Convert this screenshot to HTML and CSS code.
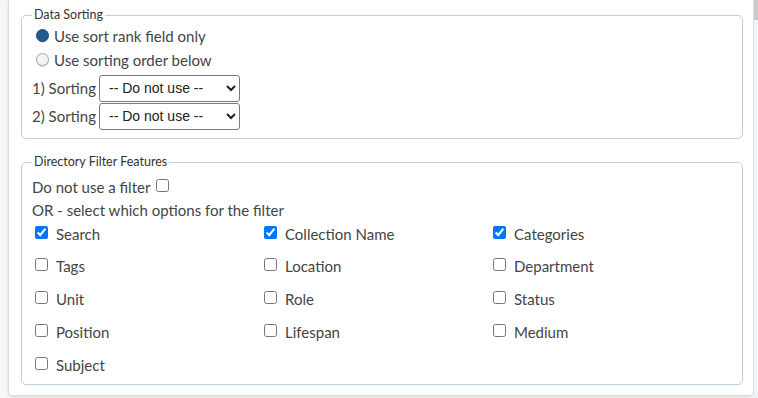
FILE: index.html
```html
<!DOCTYPE html>
<html lang="en">
<head>
    <meta charset="UTF-8">
    <title>Directory Settings</title>
    <link rel="stylesheet" href="styles.css">
</head>
<body>
    <div class="page">
        <div class="card">
            <!-- Sorting -->
            <fieldset class="group sorting">
                <legend>Data Sorting</legend>
                <label class="radio-row first">
                    <input type="radio" name="sortmode" class="radio" checked>
                    <span>Use sort rank field only</span>
                </label>
                <label class="radio-row">
                    <input type="radio" name="sortmode" class="radio">
                    <span>Use sorting order below</span>
                </label>
                <div class="select-row first">
                    <span>1) Sorting</span>
                    <select class="sort-select">
                        <option>-- Do not use --</option>
                    </select>
                </div>
                <div class="select-row">
                    <span>2) Sorting</span>
                    <select class="sort-select">
                        <option>-- Do not use --</option>
                    </select>
                </div>
            </fieldset>

            <!-- Filter -->
            <fieldset class="group filters">
                <legend>Directory Filter Features</legend>
                <label class="text-row first">
                    <span>Do not use a filter</span>
                    <input type="checkbox" class="check inline-check">
                </label>
                <div class="text-row">OR - select which options for the filter</div>
                <div class="filter-grid">
                    <label class="opt"><input type="checkbox" class="check" checked><span>Search</span></label>
                    <label class="opt"><input type="checkbox" class="check" checked><span>Collection Name</span></label>
                    <label class="opt"><input type="checkbox" class="check" checked><span>Categories</span></label>
                    <label class="opt"><input type="checkbox" class="check"><span>Tags</span></label>
                    <label class="opt"><input type="checkbox" class="check"><span>Location</span></label>
                    <label class="opt"><input type="checkbox" class="check"><span>Department</span></label>
                    <label class="opt"><input type="checkbox" class="check"><span>Unit</span></label>
                    <label class="opt"><input type="checkbox" class="check"><span>Role</span></label>
                    <label class="opt"><input type="checkbox" class="check"><span>Status</span></label>
                    <label class="opt"><input type="checkbox" class="check"><span>Position</span></label>
                    <label class="opt"><input type="checkbox" class="check"><span>Lifespan</span></label>
                    <label class="opt"><input type="checkbox" class="check"><span>Medium</span></label>
                    <label class="opt"><input type="checkbox" class="check"><span>Subject</span></label>
                </div>
            </fieldset>
        </div>
        <div class="scrollbar"></div>
    </div>
</body>
</html>
```

FILE: styles.css
```css
body {
    margin: 0;
    padding: 0;
    background-color: #f7f7f7;
    font-family: 'Lato', 'Open Sans', sans-serif;
    font-size: 15px;
    color: #444;
}
.page {
    display: flex;
    height: 398px;
    overflow: hidden;
}
.card {
    margin-left: 8px;
    width: 733px;
    height: 387px;
    padding: 8px 10px 0 12px;
    background: #fff;
    border: 1px solid #dcdcdc;
    border-top: 0;
    border-radius: 0 0 4px 4px;
    box-shadow: 0 1px 3px rgba(0, 0, 0, 0.12);
}
.scrollbar {
    margin-left: auto;
    width: 4px;
    background: linear-gradient(#c9c9c9 0, #c9c9c9 20px, #eef3f8 20px);
}
.group {
    margin: 0;
    padding: 0 10px;
    border: 1px solid #bdd0de;
    border-radius: 5px;
}
.group legend {
    padding: 0 2px;
    font-size: 12.5px;
    line-height: 14px;
    color: #333;
}
.sorting {
    padding-bottom: 8px;
    margin-bottom: 16px;
}
.radio-row {
    display: flex;
    align-items: center;
    height: 24px;
}
.radio-row.first {
    margin-top: 2px;
}
.radio {
    appearance: none;
    flex: none;
    box-sizing: border-box;
    width: 13px;
    height: 13px;
    margin: -1px 5px 0 4px;
    border-radius: 50%;
    border: 1px solid #a7a7a7;
    background: #f4f4f4;
    box-shadow: 0 1px 1px rgba(0, 0, 0, 0.15);
}
.radio:checked {
    background: #22598f;
    border-color: #1c4d7c;
}
.select-row {
    display: flex;
    align-items: center;
    height: 28px;
}
.select-row.first {
    margin-top: 2px;
}
.sort-select {
    width: 141px;
    height: 27px;
    margin-left: 3px;
    padding: 0 5px;
    border: 1px solid #7a7a7a;
    border-radius: 3px;
    background: #fff;
    font-family: 'Liberation Sans', Arial, sans-serif;
    font-size: 14px;
    color: #222;
}
.filters {
    padding-bottom: 8px;
}
.text-row {
    display: flex;
    align-items: center;
    height: 23px;
}
.text-row.first {
    margin-top: 6px;
}
.check {
    flex: none;
    width: 13px;
    height: 13px;
    margin: 0;
}
.inline-check {
    margin-left: 6px;
    margin-top: -3px;
}
.filter-grid {
    display: grid;
    grid-template-columns: 229px 229px 229px;
    grid-auto-rows: 23px;
    row-gap: 9.75px;
    padding-left: 3px;
    margin-top: 1px;
}
.opt {
    display: flex;
    align-items: center;
}
.opt .check {
    margin: -3px 8px 0 0;
}
```
